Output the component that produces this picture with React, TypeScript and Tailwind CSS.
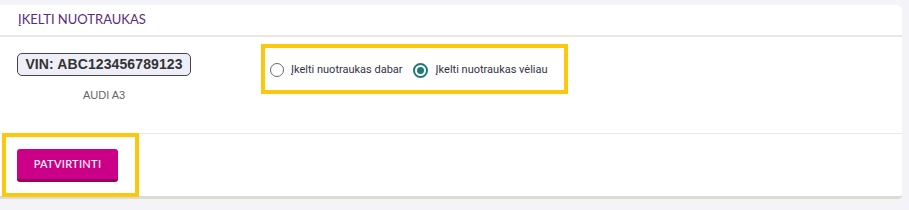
import React from "react";

export default function App() {
  return (
    <div className="w-[909px] h-[210px] bg-[#f4f3f8] pt-[5px]">
      <div className="w-[902px] bg-white rounded-tr-[6px] rounded-br-[4px] border-b-[3px] border-[#dddcd4]">
        {/* Header */}
        <div className="h-[32px] border-b-2 border-[#e9e8e1] pl-[18px] flex items-center">
          <span
            className="text-[13px] text-[#5b2c7a]"
            style={{ fontFamily: "Lato, 'Open Sans', sans-serif" }}
          >
            ĮKELTI NUOTRAUKAS
          </span>
        </div>
        {/* Body */}
        <div className="h-[97px] border-b-[1px] border-[#e9e8e1] pl-[17px] flex items-start">
          <div className="w-[174px] flex flex-col items-center pt-[16px]">
            <div
              className="h-[23px] w-[174px] rounded-[5px] border border-[#444] bg-[#eeeef8] flex items-center justify-center text-[14px] font-bold text-[#333] tracking-[0.1px]"
              style={{ fontFamily: "'Liberation Sans', Arial, sans-serif" }}
            >
              VIN: ABC123456789123
            </div>
            <div
              className="mt-[11px] text-[11px] text-[#666]"
              style={{ fontFamily: "'Liberation Sans', Arial, sans-serif" }}
            >
              AUDI A3
            </div>
          </div>
          <div className="ml-[70px] mt-[7px] w-[307px] h-[50px] border-4 border-[#fcc80b] flex items-center pl-[5px] pt-[2px]">
            <div className="flex items-center">
              <span className="w-[14px] h-[14px] rounded-full border-[1.5px] border-[#6b6b6b] bg-white" />
              <span
                className="ml-[7px] text-[11px] text-[#333344]"
                style={{ fontFamily: "Roboto, sans-serif" }}
              >
                Įkelti nuotraukas dabar
              </span>
            </div>
            <div className="flex items-center ml-[10px]">
              <span className="w-[15px] h-[15px] rounded-full border-2 border-[#1b7a77] bg-white flex items-center justify-center">
                <span className="w-[7px] h-[7px] rounded-full bg-[#1b7a77]" />
              </span>
              <span
                className="ml-[8px] text-[11px] text-[#333344]"
                style={{ fontFamily: "Roboto, sans-serif" }}
              >
                Įkelti nuotraukas vėliau
              </span>
            </div>
          </div>
        </div>
        {/* Footer */}
        <div className="h-[63px] pl-[2px]">
          <div className="-mt-[1px] w-[137px] h-[64px] border-4 border-[#fcc80b] pl-[11px] pt-[12px]">
            <button
              className="w-[101px] h-[33px] rounded-[3px] bg-[#cc0088] border-b-[3px] border-[#98005f] text-white text-[11px] font-medium tracking-[0.3px]"
              style={{ fontFamily: "Lato, 'Open Sans', sans-serif" }}
            >
              PATVIRTINTI
            </button>
          </div>
        </div>
      </div>
    </div>
  );
}
